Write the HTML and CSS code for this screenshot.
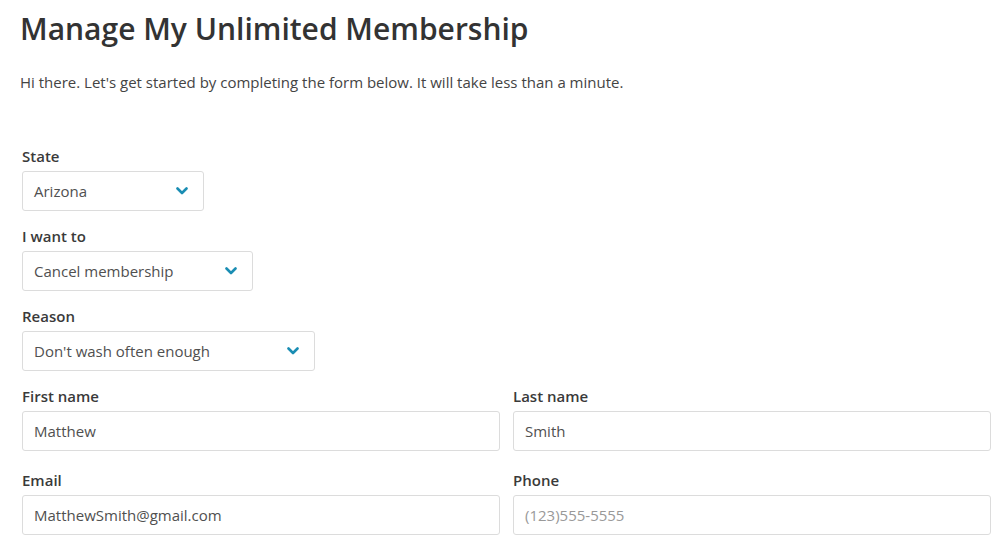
FILE: index.html
```html
<!DOCTYPE html>
<html lang="en">
<head>
<meta charset="utf-8">
<title>Manage My Unlimited Membership</title>
<link rel="stylesheet" href="styles.css">
</head>
<body>
<main class="page">
  <h1 class="title">Manage My Unlimited Membership</h1>
  <p class="intro">Hi there. Let's get started by completing the form below. It will take less than a minute.</p>

  <form class="form">
    <div class="field">
      <label class="label">State</label>
      <div class="select w-state"><span>Arizona</span><svg class="chev" viewBox="0 0 12 8"><path d="M1.5 1.5 6 6 10.5 1.5"/></svg></div>
    </div>
    <div class="field">
      <label class="label">I want to</label>
      <div class="select w-action"><span>Cancel membership</span><svg class="chev" viewBox="0 0 12 8"><path d="M1.5 1.5 6 6 10.5 1.5"/></svg></div>
    </div>
    <div class="field">
      <label class="label">Reason</label>
      <div class="select w-reason"><span>Don't wash often enough</span><svg class="chev" viewBox="0 0 12 8"><path d="M1.5 1.5 6 6 10.5 1.5"/></svg></div>
    </div>
    <div class="grid">
      <div class="field">
        <label class="label">First name</label>
        <div class="input">Matthew</div>
      </div>
      <div class="field">
        <label class="label">Last name</label>
        <div class="input">Smith</div>
      </div>
      <div class="field">
        <label class="label">Email</label>
        <div class="input">MatthewSmith@gmail.com</div>
      </div>
      <div class="field">
        <label class="label">Phone</label>
        <div class="input placeholder">(123)555-5555</div>
      </div>
    </div>
  </form>
</main>
</body>
</html>
```

FILE: styles.css
```css
* { box-sizing: border-box; }
html, body { margin: 0; padding: 0; background: #fff; }
body {
  font-family: "Open Sans", "Noto Sans", sans-serif;
  color: #333;
}
.page {
  padding: 8px 17px 0 20px;
}
.title {
  margin: 0;
  font-size: 30px;
  line-height: 42px;
  font-weight: 600;
  color: #333;
}
.intro {
  margin: 22px 0 0 0;
  font-size: 15px;
  line-height: 20px;
  color: #444;
}
.form {
  margin-top: 54px;
  padding-left: 2px;
  display: flex;
  flex-direction: column;
  gap: 15px;
}
.field {
  display: flex;
  flex-direction: column;
  gap: 5px;
}
.label {
  font-size: 15px;
  line-height: 20px;
  font-weight: 600;
  color: #3a3a3a;
}
.select, .input {
  height: 40px;
  border: 1px solid #dcdcdc;
  border-radius: 3px;
  padding: 0 11px;
  display: flex;
  align-items: center;
  font-size: 15px;
  color: #505050;
}
.select {
  justify-content: space-between;
  padding-right: 15px;
}
.w-state { width: 182px; }
.w-action { width: 231px; }
.w-reason { width: 293px; }
.chev {
  width: 12px;
  height: 8px;
  fill: none;
  stroke: #1a8db3;
  stroke-width: 2.6;
  stroke-linecap: round;
  stroke-linejoin: round;
}
.grid {
  display: grid;
  grid-template-columns: 1fr 1fr;
  column-gap: 13px;
  row-gap: 19px;
}
.placeholder { color: #999; }
```
